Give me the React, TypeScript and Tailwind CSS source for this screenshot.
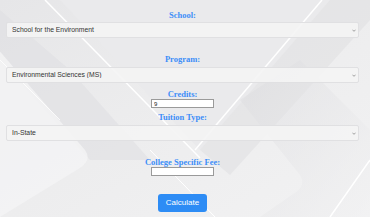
import React, { useState } from "react";

const serif = { fontFamily: '"Liberation Serif", "Times New Roman", serif' };
const sans = { fontFamily: '"Liberation Sans", Arial, sans-serif' };

function Backdrop() {
  return (
    <svg
      className="absolute inset-0 h-full w-full"
      viewBox="0 0 370 217"
      preserveAspectRatio="none"
    >
      <defs>
        <linearGradient id="bg" x1="0" y1="0" x2="1" y2="1">
          <stop offset="0" stopColor="#e6e6e8" />
          <stop offset="0.5" stopColor="#ededee" />
          <stop offset="1" stopColor="#f2f2f3" />
        </linearGradient>
        <linearGradient id="band" x1="0" y1="0" x2="1" y2="1">
          <stop offset="0" stopColor="#dadadd" />
          <stop offset="1" stopColor="#f2f2f3" />
        </linearGradient>
      </defs>
      <rect width="370" height="217" fill="url(#bg)" />
      <path d="M0 10 L0 60 L90 160 L150 160 L70 70 Z" fill="#dfdfe2" opacity="0.6" />
      <path d="M-10 40 L85 150 Q92 160 80 168 L0 217 L-10 217 Z" fill="#f4f4f5" opacity="0.8" />
      <path d="M60 0 L200 150 L330 0 Z" fill="#eaeaec" />
      <path d="M200 150 L330 0 L370 0 L370 20 L230 175 Z" fill="#dddde0" opacity="0.5" />
      <path d="M240 100 L300 175 Q306 185 296 192 L260 217 L370 217 L370 130 L300 60 Z" fill="url(#band)" opacity="0.5" />
      <path d="M45 0 L200 158" stroke="#ffffff" strokeWidth="1.5" />
      <path d="M322 0 L195 150" stroke="#ffffff" strokeWidth="1.5" />
      <path d="M0 60 L60 120" stroke="#ffffff" strokeWidth="1" opacity="0.8" />
      <path d="M150 150 L215 217" stroke="#ffffff" strokeWidth="1" />
      <path d="M370 160 L330 217" stroke="#ffffff" strokeWidth="1.5" />
    </svg>
  );
}

function Label({ children, className = "" }: { children: React.ReactNode; className?: string }) {
  return (
    <div
      className={`h-[10px] text-[8.5px] font-bold leading-[10px] text-[#3d8ef8] ${className}`}
      style={serif}
    >
      {children}
    </div>
  );
}

function Select({ value, options, className = "" }: { value: string; options: string[]; className?: string }) {
  const [v, setV] = useState(value);
  return (
    <div className={`relative h-4 w-full ${className}`}>
      <select
        value={v}
        onChange={(e) => setV(e.target.value)}
        className="block h-4 w-full appearance-none rounded-[2px] border border-[#e0e0e2] bg-[#f4f4f4]/90 pl-[5px] text-[6.8px] leading-none text-[#333] outline-none"
        style={sans}
      >
        {options.map((o) => (
          <option key={o}>{o}</option>
        ))}
      </select>
      <svg className="pointer-events-none absolute right-[3px] top-[7px] h-[3px] w-[4px]" viewBox="0 0 10 6">
        <path d="M1 1 L5 5 L9 1" stroke="#666" strokeWidth="1.5" fill="none" />
      </svg>
    </div>
  );
}

function SmallInput({ value }: { value: string }) {
  const [v, setV] = useState(value);
  return (
    <input
      value={v}
      onChange={(e) => setV(e.target.value)}
      className="block h-[9px] w-[63px] border border-[#9a9a9a] bg-white px-[2px] text-[6px] leading-none text-[#222] outline-none"
      style={sans}
    />
  );
}

export default function App() {
  return (
    <div className="relative h-[217px] w-[370px] overflow-hidden leading-none">
      <Backdrop />
      <div className="relative flex flex-col items-center pl-[6px] pr-[11px] pt-[10px]">
        <Label>School:</Label>
        <Select className="mt-[2px]" value="School for the Environment" options={["School for the Environment"]} />
        <Label className="mt-[16px]">Program:</Label>
        <Select className="mt-[3px]" value="Environmental Sciences (MS)" options={["Environmental Sciences (MS)"]} />
        <Label className="mt-[6px]">Credits:</Label>
        <SmallInput value="9" />
        <Label className="mt-[4px]">Tuition Type:</Label>
        <Select className="mt-[3px]" value="In-State" options={["In-State", "Out-of-State"]} />
        <Label className="mt-[16px]">College Specific Fee:</Label>
        <SmallInput value="" />
        <button
          type="button"
          className="mt-[18px] h-[18px] w-[49px] rounded-[3px] bg-[#2d8cf5] text-[8px] text-white"
          style={sans}
        >
          Calculate
        </button>
      </div>
    </div>
  );
}
